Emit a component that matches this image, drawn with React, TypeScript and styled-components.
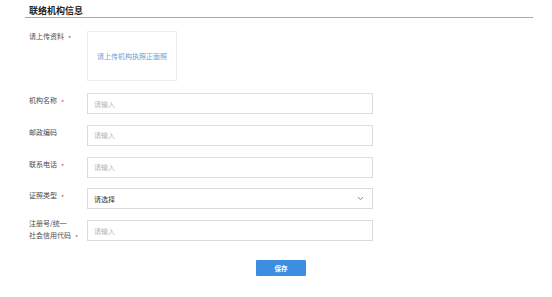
import React from "react";
import styled, { createGlobalStyle } from "styled-components";

const Global = createGlobalStyle`
  html, body { margin: 0; padding: 0; background: #fff; }
  body { font-family: "Noto Sans CJK SC", "Noto Sans", sans-serif; }
  * { box-sizing: border-box; }
`;

const Page = styled.div`
  width: 552px;
  height: 297px;
  padding: 0 19px 0 25px;
  overflow: hidden;
`;

const Header = styled.div`
  height: 18px;
  padding: 4px 0 0 4px;
  border-bottom: 1px solid #a9a9a9;
  font-size: 9px;
  line-height: 13px;
  font-weight: 700;
  color: #222;
`;

const Form = styled.div`
  display: flex;
  flex-direction: column;
  padding-left: 4px;
  margin-top: 13px;
`;

const Row = styled.div<{ $mt?: number }>`
  display: flex;
  align-items: flex-start;
  margin-top: ${(p) => p.$mt ?? 0}px;
`;

const Label = styled.div<{ $offset?: number }>`
  width: 58px;
  flex: none;
  font-size: 7px;
  line-height: 12px;
  color: #4d4d4d;
  margin-top: ${(p) => p.$offset ?? 0}px;
`;

const Star = styled.span`
  display: inline-block;
  color: #e0434b;
  margin-left: 4px;
  font-size: 7px;
  vertical-align: -2px;
`;

const Upload = styled.div`
  width: 90px;
  height: 50px;
  border: 1px solid #ececec;
  display: flex;
  align-items: center;
  justify-content: center;
  font-size: 7px;
  color: #6a9edb;
`;

const Input = styled.div<{ $filled?: boolean }>`
  width: 286px;
  height: 21px;
  border: 1px solid #dcdcdc;
  display: flex;
  align-items: center;
  justify-content: space-between;
  padding: 0 8px 0 6px;
  font-size: 7px;
  color: ${(p) => (p.$filled ? "#333" : "#b5b5b5")};
`;

const ButtonRow = styled.div`
  display: flex;
  justify-content: center;
  padding-left: 4px;
  margin-top: 17px;
`;

const Button = styled.button`
  width: 50px;
  height: 16px;
  border: none;
  border-radius: 1px;
  background: #3c8fe0;
  color: #fff;
  font-family: inherit;
  font-size: 6.5px;
  font-weight: 700;
  padding: 0;
  cursor: pointer;
`;

const Chevron = () => (
  <svg width="7" height="5" viewBox="0 0 7 5">
    <path d="M1 1.2 L3.5 3.6 L6 1.2" fill="none" stroke="#777" strokeWidth="0.9" />
  </svg>
);

export default function App() {
  return (
    <Page>
      <Global />
      <Header>联络机构信息</Header>
      <Form>
        <Row>
          <Label $offset={-1}>
            请上传资料<Star>*</Star>
          </Label>
          <Upload>请上传机构执照正面照</Upload>
        </Row>
        <Row $mt={12}>
          <Label $offset={1}>
            机构名称<Star>*</Star>
          </Label>
          <Input>请输入</Input>
        </Row>
        <Row $mt={10.75}>
          <Label $offset={1}>邮政编码</Label>
          <Input>请输入</Input>
        </Row>
        <Row $mt={10.75}>
          <Label $offset={1}>
            联系电话<Star>*</Star>
          </Label>
          <Input>请输入</Input>
        </Row>
        <Row $mt={10.75}>
          <Label $offset={1}>
            证照类型<Star>*</Star>
          </Label>
          <Input $filled>
            请选择
            <Chevron />
          </Input>
        </Row>
        <Row $mt={10.75}>
          <Label $offset={-3}>
            注册号/统一
            <br />
            社会信用代码<Star>*</Star>
          </Label>
          <Input>请输入</Input>
        </Row>
      </Form>
      <ButtonRow>
        <Button>保存</Button>
      </ButtonRow>
    </Page>
  );
}
